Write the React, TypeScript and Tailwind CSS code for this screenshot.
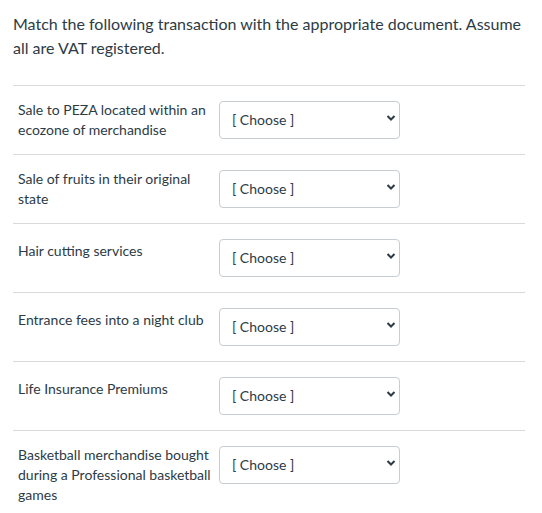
const rows = [
  { label: "Sale to PEZA located within an ecozone of merchandise", single: false },
  { label: "Sale of fruits in their original state", single: false },
  { label: "Hair cutting services", single: true },
  { label: "Entrance fees into a night club", single: true },
  { label: "Life Insurance Premiums", single: true },
  { label: "Basketball merchandise bought during a Professional basketball games", single: false },
];

function ChooseSelect() {
  return (
    <div className="relative mt-[1px] w-[181px] h-[38px] shrink-0 rounded-[4px] border border-[#c7cdd1] bg-white">
      <span className="absolute left-[12px] top-[8px] text-[14px] leading-[20px] text-[#2d3b45]">
        [ Choose ]
      </span>
      <svg
        className="absolute right-[3px] top-[12px]"
        width="10"
        height="8"
        viewBox="0 0 10 8"
      >
        <path d="M1.5 2 L5 5.5 L8.5 2" fill="none" stroke="#2d3b45" strokeWidth="2" />
      </svg>
    </div>
  );
}

export default function App() {
  return (
    <div className="bg-white w-[542px] min-h-[513px] px-[13px] pt-[12px] font-['Lato',sans-serif] text-[#2d3b45]">
      <p className="text-[16px] leading-[24px] pr-[4px]">
        Match the following transaction with the appropriate document. Assume
        all are VAT registered.
      </p>
      <div className="mt-[25px] w-[512px]">
        {rows.map((r) => (
          <div
            key={r.label}
            className="flex items-start min-h-[69px] border-t border-[#d7dadc] py-[14px]"
          >
            <div
              className={
                r.single
                  ? "w-[206px] pl-[5px] pr-[1px] pt-[3px] text-[14px] leading-[20px]"
                  : "w-[206px] pl-[5px] pr-[1px] text-[14px] leading-[20px]"
              }
            >
              {r.label}
            </div>
            <ChooseSelect />
          </div>
        ))}
      </div>
    </div>
  );
}
